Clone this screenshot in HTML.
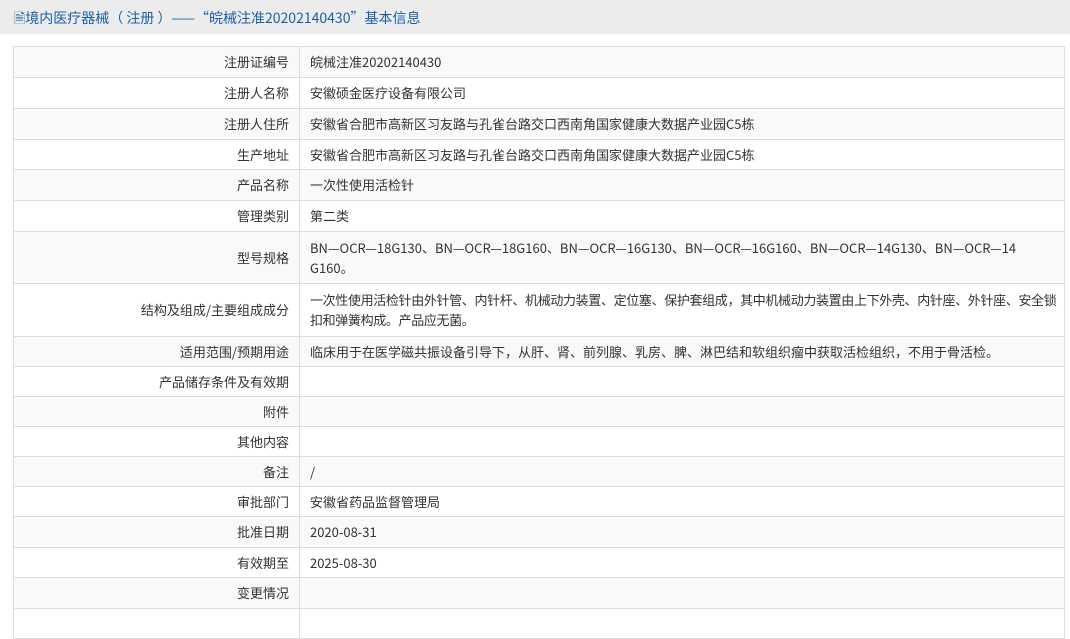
<!DOCTYPE html>
<html><head><meta charset="utf-8"><style>
body{margin:0;background:#fff;font-family:"Noto Sans CJK SC",sans-serif;font-size:13px;color:#333;width:1070px;height:613px;overflow:hidden}
.hd{height:34px;background:#ececec;color:#1a5fa8;font-size:14px;line-height:36px;padding-left:14px;white-space:nowrap}
table{position:absolute;left:13px;top:46px;width:1052px;border-collapse:collapse;table-layout:fixed}
td{border:1px solid #ddd;padding:0 10px;line-height:20px;vertical-align:middle;overflow:hidden;white-space:nowrap}
td.l{text-align:right;width:265px}
tr:nth-child(odd){background:#f9f9f9}
.t{letter-spacing:-0.35px}
</style></head><body>
<div class="hd">🗎境内医疗器械（ 注册 ）——“皖械注准20202140430”基本信息</div>
<table>
<tr style="height:31px"><td class="l">注册证编号</td><td>皖械注准20202140430</td></tr>
<tr style="height:31px"><td class="l">注册人名称</td><td>安徽硕金医疗设备有限公司</td></tr>
<tr style="height:31px"><td class="l">注册人住所</td><td>安徽省合肥市高新区习友路与孔雀台路交口西南角国家健康大数据产业园C5栋</td></tr>
<tr style="height:30px"><td class="l">生产地址</td><td>安徽省合肥市高新区习友路与孔雀台路交口西南角国家健康大数据产业园C5栋</td></tr>
<tr style="height:31px"><td class="l">产品名称</td><td>一次性使用活检针</td></tr>
<tr style="height:31px"><td class="l">管理类别</td><td>第二类</td></tr>
<tr style="height:52px"><td class="l">型号规格</td><td>BN—OCR—18G130、BN—OCR—18G160、BN—OCR—16G130、BN—OCR—16G160、BN—OCR—14G130、BN—OCR—14<br>G160。</td></tr>
<tr style="height:53px"><td class="l">结构及组成/主要组成成分</td><td class="t">一次性使用活检针由外针管、内针杆、机械动力装置、定位塞、保护套组成，其中机械动力装置由上下外壳、内针座、外针座、安全锁<br>扣和弹簧构成。产品应无菌。</td></tr>
<tr style="height:30px"><td class="l">适用范围/预期用途</td><td>临床用于在医学磁共振设备引导下，从肝、肾、前列腺、乳房、脾、淋巴结和软组织瘤中获取活检组织，不用于骨活检。</td></tr>
<tr style="height:30px"><td class="l">产品储存条件及有效期</td><td></td></tr>
<tr style="height:30px"><td class="l">附件</td><td></td></tr>
<tr style="height:30px"><td class="l">其他内容</td><td></td></tr>
<tr style="height:30px"><td class="l">备注</td><td>/</td></tr>
<tr style="height:30px"><td class="l">审批部门</td><td>安徽省药品监督管理局</td></tr>
<tr style="height:31px"><td class="l">批准日期</td><td>2020-08-31</td></tr>
<tr style="height:30px"><td class="l">有效期至</td><td>2025-08-30</td></tr>
<tr style="height:31px"><td class="l">变更情况</td><td></td></tr>
<tr style="height:30px"><td class="l"></td><td></td></tr>
</table>
</body></html>
